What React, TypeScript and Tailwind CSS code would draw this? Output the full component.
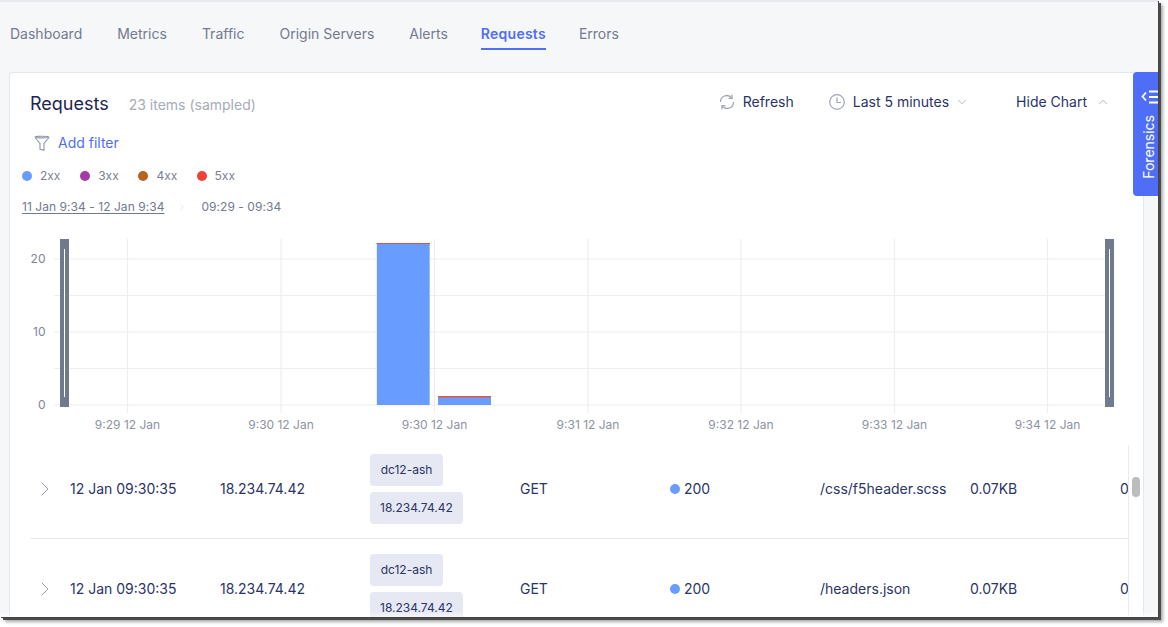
import { ChevronDown, ChevronRight, ChevronUp } from 'lucide-react';

const tabs = ['Dashboard', 'Metrics', 'Traffic', 'Origin Servers', 'Alerts', 'Requests', 'Errors'];

const legend = [
  { label: '2xx', color: 'bg-[#699cff]' },
  { label: '3xx', color: 'bg-[#a73ba5]' },
  { label: '4xx', color: 'bg-[#b5651d]' },
  { label: '5xx', color: 'bg-[#ef4136]' },
];

const rows = [
  { path: '/css/f5header.scss' },
  { path: '/headers.json' },
];

const gridY = [259, 295.5, 332, 368.5, 405];
const ticks = [
  { x: 127.5, label: '9:29 12 Jan' },
  { x: 281, label: '9:30 12 Jan' },
  { x: 434.5, label: '9:30 12 Jan' },
  { x: 588, label: '9:31 12 Jan' },
  { x: 741, label: '9:32 12 Jan' },
  { x: 894.5, label: '9:33 12 Jan' },
  { x: 1047.5, label: '9:34 12 Jan' },
];

function RefreshIcon() {
  return (
    <svg width="16" height="16" viewBox="0 0 16 16" fill="none" stroke="#9ea5b8" strokeWidth="1.3">
      <path d="M1.5 8A6.3 6.3 0 0 1 12.6 3.8" />
      <path d="M13 0.8V4.3H9.6" />
      <path d="M14.5 8A6.3 6.3 0 0 1 3.4 12.2" />
      <path d="M3 15.2V11.7H6.4" />
    </svg>
  );
}

function ClockIcon() {
  return (
    <svg width="16" height="16" viewBox="0 0 16 16" fill="none" stroke="#9ea5b8" strokeWidth="1.2">
      <circle cx="8" cy="8" r="7.3" />
      <path d="M8 3.5V8.5H12" />
    </svg>
  );
}

function FunnelIcon() {
  return (
    <svg width="16" height="16" viewBox="0 0 16 16" fill="none" stroke="#8f96a8" strokeWidth="1.1">
      <path d="M1 2C1 0.9 15 0.9 15 2C15 3.1 1 3.1 1 2Z" />
      <path d="M1 2.5L6 8.5V14.2L10 15.2V8.5L15 2.5" />
    </svg>
  );
}

// svg origin sits at page x=10, y=236
function Chart() {
  return (
    <svg width="1124" height="209" viewBox="10 236 1124 209" className="block">
      {gridY.map((y) => (
        <line key={y} x1="54" x2="1114" y1={y} y2={y} stroke="#edeef3" strokeWidth="1.2" />
      ))}
      {ticks.map((t) => (
        <line key={t.x} x1={t.x} x2={t.x} y1="239" y2="413" stroke="#edeef3" strokeWidth="1.2" />
      ))}
      <text x="45.5" y="263" textAnchor="end" fontSize="12" fill="#7f8599">20</text>
      <text x="45.5" y="336" textAnchor="end" fontSize="12" fill="#7f8599">10</text>
      <text x="45.5" y="409" textAnchor="end" fontSize="12" fill="#7f8599">0</text>
      {ticks.map((t) => (
        <text key={t.x} x={t.x} y="429" textAnchor="middle" fontSize="12" fill="#8d92a3">{t.label}</text>
      ))}
      <rect x="376.5" y="243" width="53.5" height="162" fill="#cfdfff" />
      <rect x="377" y="244" width="52.5" height="161" fill="#699cff" />
      <rect x="376.5" y="243" width="53.5" height="1" fill="#d9534a" />
      <rect x="438" y="397" width="53" height="8" fill="#699cff" />
      <rect x="438" y="396" width="53" height="1.5" fill="#e0564b" />
      <rect x="60" y="239" width="9" height="168" fill="#6f7a8e" />
      <rect x="64" y="249" width="1" height="148" fill="#ffffff" />
      <rect x="1105" y="239" width="9" height="168" fill="#6f7a8e" />
      <rect x="1109" y="249" width="1" height="148" fill="#ffffff" />
    </svg>
  );
}

function Row({ path, last }: { path: string; last?: boolean }) {
  return (
    <div className={`flex h-[100px] items-center text-sm text-[#2a3468] ${last ? '' : 'border-b border-[#e9eaf2]'}`}>
      <div className="w-10 pl-[3px]">
        <ChevronRight size={24} strokeWidth={0.8} className="text-[#7d8394]" />
      </div>
      <div className="w-[150px]">12 Jan 09:30:35</div>
      <div className="w-[150px]">18.234.74.42</div>
      <div className="flex w-[150px] flex-col items-start gap-1.5 text-xs">
        <span className="flex h-8 w-[73px] items-center justify-center rounded bg-[#e6e8f3]">dc12-ash</span>
        <span className="flex h-8 items-center rounded bg-[#e6e8f3] px-2.5">18.234.74.42</span>
      </div>
      <div className="w-[150px]">GET</div>
      <div className="flex w-[150px] items-center gap-1">
        <span className="h-2.5 w-2.5 rounded-full bg-[#699cff]" />
        200
      </div>
      <div className="w-[150px]">{path}</div>
      <div className="w-[150px]">0.07KB</div>
      <div className="w-2 overflow-hidden">0</div>
    </div>
  );
}

export default function App() {
  return (
    <div className="h-screen w-full overflow-hidden bg-white font-['Inter',sans-serif]">
      <div className="relative h-[617px] w-[1158px] overflow-hidden border-t-2 border-[#e8e9ee] bg-[#f6f7f9] shadow-[1px_1px_0_#444,3px_3px_0_#4a4a4a,5px_5px_3px_#aaa]">
        {/* tabs */}
        <nav className="flex h-[48px] items-start gap-[35px] pl-2.5 pt-[22px] text-sm text-[#737a90]">
          {tabs.map((tab) =>
            tab === 'Requests' ? (
              <span key={tab} className="-mx-[2px] h-[26px] border-b-2 border-[#4f6ef7] font-semibold tracking-[0.25px] text-[#4f6ef7]">
                {tab}
              </span>
            ) : (
              <span key={tab}>{tab}</span>
            ),
          )}
        </nav>

        {/* card */}
        <div className="ml-[9px] mt-[22px] h-[560px] w-[1135px] rounded-t border border-b-0 border-[#e4e7f3] bg-white">
          <div className="flex h-[58px] items-center pl-5 pr-[33px]">
            <h1 className="mt-[3px] text-lg leading-none text-[#1b2456]">Requests</h1>
            <span className="ml-5 mt-[5px] text-sm text-[#a6abb8]">23 items (sampled)</span>
            <div className="ml-auto flex items-center text-sm text-[#2a3468]">
              <RefreshIcon />
              <span className="ml-[8px]">Refresh</span>
              <span className="ml-[35px]"><ClockIcon /></span>
              <span className="ml-2">Last 5 minutes</span>
              <ChevronDown size={14} strokeWidth={1.2} className="ml-[6px] text-[#8f96aa]" />
              <span className="ml-[47px]">Hide Chart</span>
              <ChevronUp size={14} strokeWidth={1.2} className="ml-[9px] text-[#8f96aa]" />
            </div>
          </div>

          <div className="mt-[2px] flex h-5 items-center pl-[24px] text-sm text-[#4f6ef7]">
            <FunnelIcon />
            <span className="ml-[8px]">Add filter</span>
          </div>

          <div className="ml-3 mt-[14px] flex h-[18px] items-center text-xs text-[#7a8094]">
            {legend.map((item) => (
              <div key={item.label} className="flex w-[58.2px] items-center gap-2">
                <span className={`h-2.5 w-2.5 rounded-full ${item.color}`} />
                {item.label}
              </div>
            ))}
          </div>

          <div className="ml-3 mt-[13px] flex h-[18px] items-center text-xs tracking-[0.05px] text-[#737a90]">
            <span className="underline underline-offset-2">11 Jan 9:34 - 12 Jan 9:34</span>
            <ChevronRight size={10} strokeWidth={1} className="ml-[13px] text-[#c5c8d3]" />
            <span className="ml-[14px]">09:29 - 09:34</span>
          </div>

          <div className="mt-[20px]">
            <Chart />
          </div>

          {/* table */}
          <div className="relative flex h-[172px] overflow-hidden">
            <div className="-mt-[6px] ml-5 w-[1099px] overflow-hidden">
              {rows.map((r, i) => (
                <Row key={i} path={r.path} last={i === rows.length - 1} />
              ))}
            </div>
            <div className="relative w-[15px] border-l border-[#e9eaf2]">
              <div className="absolute left-[3px] top-[32px] h-5 w-2 rounded bg-[#bcbcbc]" />
            </div>
          </div>
        </div>

        {/* forensics tab */}
        <div className="absolute left-[1133px] top-[70px] flex h-[124px] w-[25px] flex-col items-center overflow-hidden rounded-l bg-[#4f6ef7] text-white">
          <div className="mt-[18px] flex w-full items-center pl-[7px]">
            <svg width="18" height="14" viewBox="0 0 18 14" fill="none" stroke="white">
              <path d="M6 2.5 L2.5 6.5 L6 10.5" strokeWidth="1.8" />
              <path d="M9 1.5H18 M9 7H18 M9 12.5H18" strokeWidth="2" />
            </svg>
          </div>
          <span className="ml-[6px] mt-[11px] rotate-180 text-sm [writing-mode:vertical-rl]">Forensics</span>
        </div>

        {/* soft fade along the bottom edge */}
        <div className="absolute bottom-0 left-0 h-1.5 w-full bg-gradient-to-t from-white/60 to-transparent" />
      </div>
    </div>
  );
}
